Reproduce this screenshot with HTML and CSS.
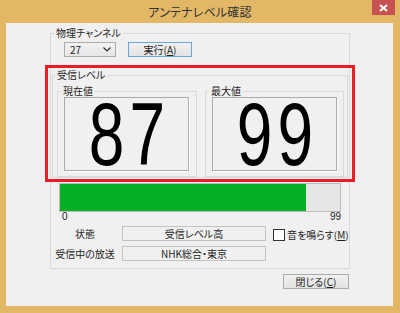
FILE: index.html
```html
<!DOCTYPE html>
<html lang="ja">
<head>
<meta charset="utf-8">
<title>アンテナレベル確認</title>
<link rel="stylesheet" href="styles.css">
</head>
<body>
<div class="window">
  <div class="titlebar">
    <div></div>
    <div class="title">アンテナレベル確認</div>
    <div class="close">
      <svg width="9" height="8" viewBox="0 0 9 8"><path d="M1 1 L8 7 M8 1 L1 7" stroke="#fff" stroke-width="2"/></svg>
    </div>
  </div>
  <div class="client">
    <div class="group outer">
      <span class="legend">物理チャンネル</span>
      <div class="row1">
        <div class="combo"><span>27</span>
          <svg width="8" height="5" viewBox="0 0 8 5"><path d="M0.5 0.5 L4 4 L7.5 0.5" stroke="#333" stroke-width="1.2" fill="none"/></svg>
        </div>
        <div class="btn default">実行(<u>A</u>)</div>
      </div>
      <div class="group level">
        <span class="legend">受信レベル</span>
        <div class="subs">
          <div class="group sub">
            <span class="legend">現在値</span>
            <div class="display"><span class="num">87</span></div>
          </div>
          <div class="group sub">
            <span class="legend">最大値</span>
            <div class="display"><span class="num">99</span></div>
          </div>
        </div>
      </div>
      <div class="bar"><div class="fill" style="width:246px"></div></div>
      <div class="scale"><span>0</span><span>99</span></div>
      <div class="info">
        <div class="lbl">状態</div>
        <div class="box">受信レベル高</div>
        <div class="check"><span class="cb"></span><span class="cbtext">音を鳴らす(<u>M</u>)</span></div>
        <div class="lbl">受信中の放送</div>
        <div class="box">NHK総合・東京</div>
        <div></div>
      </div>
    </div>
    <div class="footer"><div class="btn closebtn">閉じる(<u>C</u>)</div></div>
    <div class="annot"></div>
  </div>
</div>
</body>
</html>
```
FILE: styles.css
```css
* { box-sizing: border-box; }
html, body { margin: 0; padding: 0; }
body {
  width: 400px; height: 313px; overflow: hidden;
  font-family: "Noto Sans CJK JP", "Noto Sans", sans-serif;
  font-feature-settings: "palt";
  font-size: 10px; color: #1e1e1e;
}
.window {
  width: 400px; height: 313px;
  background: #e2b866;
  padding: 0 7px 7px 6px;
  display: flex; flex-direction: column;
}
.titlebar {
  height: 23px; margin: 0 -7px 0 -6px;
  display: grid; grid-template-columns: 1fr auto 1fr;
  align-items: start;
}
.title {
  font-size: 12px; line-height: 12px; color: #333;
  padding-top: 6px; letter-spacing: 0.2px;
}
.close {
  justify-self: end; margin-right: 5px;
  width: 23px; height: 15px; background: #c75050;
  display: flex; align-items: center; justify-content: center;
}
.close svg { display: block; }
.client {
  position: relative;
  height: 283px; background: #f0f0f0;
  padding: 10px 43px 0 44px;
}
.group { border: 1px solid #d9d9d9; }
.legend {
  display: block; width: max-content;
  height: 12px; line-height: 12px; margin-top: -7px;
  padding: 0 2px; background: #f0f0f0;
}
.outer { height: 236px; }
.outer > .legend { margin-left: 3px; }
.row1 { display: flex; margin-top: 3px; height: 15px; }
.combo {
  margin-left: 13px; width: 52px; height: 15px;
  border: 1px solid #acacac;
  background: linear-gradient(#f2f2f2, #e6e6e6);
  display: flex; align-items: center; justify-content: space-between;
  padding: 0 4px 0 5px; line-height: 12px;
}
.combo svg { display: block; }
.btn {
  height: 15px; line-height: 12px;
  border: 1px solid #acacac;
  background: linear-gradient(#f0f0f0, #e3e3e3);
  display: flex; align-items: center; justify-content: center;
}
.btn u { text-underline-offset: 1px; }
.default { margin-left: 12px; width: 64px; border-color: #6aa6e0; }
.level { margin: 18px 1px 0 1px; height: 103px; }
.level > .legend { margin-left: 2px; }
.subs { display: flex; gap: 8px; margin-top: 10px; padding: 0 3px 0 4px; }
.sub { width: 140px; height: 86px; }
.sub + .sub { width: 139px; }
.sub > .legend { margin-left: 3px; padding: 0 2px; }
.display {
  margin-left: 6px; width: 125px; height: 74px;
  border: 1px solid #ababab;
  box-shadow: 1px 1px 0 #fdfdfd;
  display: flex; align-items: center; justify-content: center;
}
.num {
  display: inline-block;
  font-family: "Liberation Sans", Arial, sans-serif;
  font-feature-settings: normal;
  font-size: 89px; line-height: 74px; color: #000;
  letter-spacing: 7px; padding-left: 7px;
  transform: scaleX(0.72);
}
.bar {
  margin: 5px 0 0 8px; width: 282px; height: 29px;
  border: 1px solid #bcbcbc; background: #e6e6e6;
}
.fill { height: 100%; background: #06b025; }
.scale {
  margin-left: 8px; width: 282px; height: 10px;
  display: flex; justify-content: space-between;
  padding-left: 3px;
  font-family: "Liberation Sans", Arial, sans-serif;
  font-size: 10px; line-height: 10px;
}
.info {
  margin-top: 4px;
  display: grid; grid-template-columns: 68px 144px 1fr;
  grid-auto-rows: 15px; column-gap: 3px; row-gap: 5px;
}
.lbl { text-align: center; line-height: 15px; white-space: nowrap; }
.box {
  border: 1px solid #c3c3c3; background: #f0f0f0;
  text-align: center; line-height: 13px; white-space: nowrap;
}
.check {
  display: flex; align-items: center; margin-left: 4px; gap: 2px;
  line-height: 12px; padding-top: 3px; white-space: nowrap;
}
.cb { flex: none; width: 12px; height: 12px; border: 1px solid #333; background: #fff; }
.cbtext { white-space: nowrap; }
.footer { display: flex; justify-content: flex-end; margin-top: 5px; padding-right: 1px; }
.closebtn { width: 66px; }
.annot {
  position: absolute; left: 39px; top: 42px;
  width: 310px; height: 117px;
  border: 3px solid #ed1c24;
}
```
